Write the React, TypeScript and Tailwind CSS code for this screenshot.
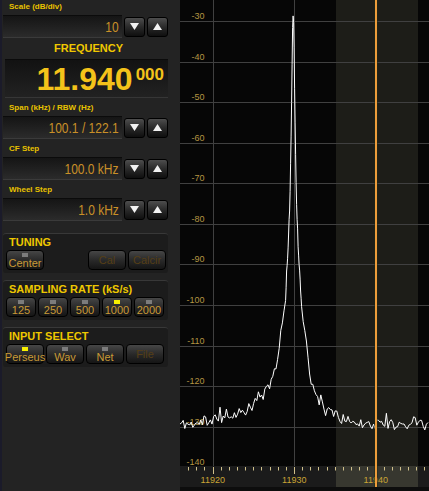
import React from 'react';

// spectrum geometry (local svg coords, panel is 249px wide)
const W = 249;
const PLOT_H = 466;
const PX_PER_KHZ = 8.15;
const F_LEFT = 11930 - 114 / PX_PER_KHZ;
const PX_PER_DB = 4.057;
const PEAK_X = 113.2;

const yOf = (db: number) => 21 + (-30 - db) * PX_PER_DB;
const xOf = (khz: number) => (khz - F_LEFT) * PX_PER_KHZ;
const crisp = (v: number) => Math.round(v) + 0.5;

type Pt = [number, number];

// distance from carrier (px) -> level (dB)
const LEFT: Pt[] = [
  [0, -28], [0.7, -32], [1.3, -45], [2.2, -60], [3.3, -74], [5, -86], [7.8, -99],
  [13.5, -111], [20.5, -118], [28.5, -122], [43.5, -125.5], [63.5, -127.3], [95, -129.3], [300, -130],
];
const RIGHT: Pt[] = [
  [0, -28], [0.7, -32], [1.3, -45], [2.2, -60], [3.2, -74], [5, -86], [8.2, -99],
  [13.2, -111], [18, -118.5], [22.5, -122.5], [31.5, -126], [46.5, -128], [70, -129.4], [300, -129.8],
];

function interp(tab: Pt[], d: number) {
  for (let i = 1; i < tab.length; i++) {
    if (d <= tab[i][0]) {
      const [d0, v0] = tab[i - 1];
      const [d1, v1] = tab[i];
      return v0 + ((v1 - v0) * (d - d0)) / (d1 - d0);
    }
  }
  return tab[tab.length - 1][1];
}

function mulberry32(seed: number) {
  let a = seed;
  return () => {
    a |= 0;
    a = (a + 0x6d2b79f5) | 0;
    let t = Math.imul(a ^ (a >>> 15), 1 | a);
    t = (t + Math.imul(t ^ (t >>> 7), 61 | t)) ^ t;
    return ((t ^ (t >>> 14)) >>> 0) / 4294967296;
  };
}

function buildTrace() {
  const r = mulberry32(11);
  const pts: string[] = [];
  let x = 0;
  while (x <= W) {
    const d = Math.abs(x - PEAK_X);
    let db = interp(x < PEAK_X ? LEFT : RIGHT, d);
    const amp = d < 3 ? 0.2 : d < 8 ? 0.8 : 1.3;
    db += (r() - 0.5) * 2 * amp;
    if (d > 6 && r() < 0.1) db += 1.2 + r() * 1.4;
    pts.push(`${x.toFixed(1)},${yOf(db).toFixed(1)}`);
    x += d < 8 ? 0.5 : 1.6;
  }
  return pts.join(' ');
}

function Spectrum() {
  const trace = React.useMemo(buildTrace, []);
  const levels = Array.from({ length: 12 }, (_, i) => -30 - i * 10);
  const ticks = Array.from({ length: 30 }, (_, i) => 11917 + i);
  const filterL = xOf(11940) - 39.5;
  const filterR = xOf(11940) + 42.5;
  const marker = 196;

  return (
    <div className="h-full flex-1 bg-[#060606]">
      <svg width={W} height={491} viewBox={`0 0 ${W} 491`} className="block">
        <rect x={filterL} y={0} width={filterR - filterL} height={PLOT_H} fill="#1d1d18" />
        {levels.slice(0, 11).map((lv) => (
          <line key={lv} x1={0} x2={W} y1={crisp(yOf(lv))} y2={crisp(yOf(lv))} stroke="#404040" strokeWidth={1} />
        ))}
        {[11920, 11930].map((f) => (
          <line key={f} x1={crisp(xOf(f))} x2={crisp(xOf(f))} y1={0} y2={PLOT_H} stroke="#404040" strokeWidth={1} />
        ))}
        {levels.map((lv) => (
          <text key={lv} x={24.5} y={yOf(lv) - 2} textAnchor="end" fontSize={9} fill="#b39442">
            {lv}
          </text>
        ))}
        <polyline points={trace} fill="none" stroke="#ffffff" strokeWidth={1} strokeLinejoin="round" />

        {/* frequency axis */}
        <rect x={0} y={PLOT_H} width={W} height={21} fill="#1b1b1b" />
        <rect x={filterL} y={PLOT_H} width={filterR - filterL} height={21} fill="#37372f" />
        <rect x={0} y={487} width={W} height={4} fill="#0d0d0d" />
        {ticks.map((k) => (
          <line
            key={k}
            x1={crisp(xOf(k))}
            x2={crisp(xOf(k))}
            y1={467}
            y2={k % 10 === 0 ? 474 : 470.5}
            stroke="#cfc08c"
            strokeWidth={1}
          />
        ))}
        {[11920, 11930, 11940].map((f) => (
          <text key={f} x={xOf(f) + 0.3} y={482.5} textAnchor="middle" fontSize={9} fill="#c9a535">
            {f}
          </text>
        ))}

        <rect x={marker - 1.5} y={0} width={3} height={487} fill="#1f2a16" />
        <rect x={marker - 1} y={0} width={2} height={487} fill="#e8902c" />
        <rect x={marker - 0.5} y={0} width={1} height={487} fill="#f7b45a" opacity={0.7} />
      </svg>
    </div>
  );
}

const LABEL = 'text-[8px] font-bold leading-[10px] text-[#e8c200]';

function ArrowBtn({ up }: { up?: boolean }) {
  return (
    <div className="flex h-[20px] w-[21px] items-center justify-center rounded-[3px] border border-black bg-gradient-to-b from-[#4e4e4e] via-[#2a2a2a] to-[#0f0f0f]">
      <svg width="9" height="7" viewBox="0 0 9 7">
        <polygon points={up ? '4.5,0 9,7 0,7' : '0,0 9,0 4.5,7'} fill="#f2f2f2" />
      </svg>
    </div>
  );
}

function ValueRow({ label, value, first }: { label: string; value: string; first?: boolean }) {
  return (
    <div>
      <div className={`${first ? 'mt-[2px]' : 'mt-[5px]'} pl-[7px] ${LABEL}`}>{label}</div>
      <div className="mt-[3px] flex items-center">
        <div className="ml-[1px] flex h-[23px] w-[119px] items-center justify-end border-t border-b border-t-[#0b0b0b] border-b-[#3a3a3a] bg-gradient-to-b from-[#151515] to-[#2b2b2b] pr-[3px]">
          <span className="inline-block origin-right scale-x-[0.8] text-[15px] leading-[15px] text-[#c99028]">
            {value}
          </span>
        </div>
        <div className="ml-[2px] flex gap-[2px]">
          <ArrowBtn />
          <ArrowBtn up />
        </div>
      </div>
    </div>
  );
}

type Led = 'on' | 'off' | undefined;

function Btn({ w, text, led, disabled }: { w: string; text: string; led?: Led; disabled?: boolean }) {
  return (
    <div
      className={`flex h-[20px] flex-col items-center rounded-[4px] border border-black bg-gradient-to-b from-[#464646] via-[#2a2a2a] to-[#151515] ${
        led ? '' : 'justify-center'
      } ${w}`}
    >
      {led && (
        <div className={`mt-[2px] h-[4px] w-[6px] ${led === 'on' ? 'bg-[#f7ef00]' : 'bg-[#7c7c7c]'}`} />
      )}
      <span
        className={`text-[11px] leading-[11px] ${led ? 'mt-[1.5px]' : ''} ${
          disabled ? 'text-[#563f16]' : 'text-[#c99a36]'
        }`}
      >
        {text}
      </span>
    </div>
  );
}

function Group({ title, className, children }: { title: string; className: string; children: React.ReactNode }) {
  return (
    <div className={`ml-[1px] w-[165px] rounded-[3px] border-t border-[#383838] bg-[#1c1c1c] pb-[3px] ${className}`}>
      <div className="pl-[6px] pt-[2px] text-[11px] font-bold leading-[12px] text-[#eec800]">{title}</div>
      <div className="mt-[2px] pl-[3px] pr-[2px]">{children}</div>
    </div>
  );
}

function ControlPanel() {
  return (
    <div className="h-full w-[180px] shrink-0 border-l-2 border-[#1b1b2a] bg-[#232323]">
      <ValueRow first label="Scale (dB/div)" value="10" />

      <div className="mt-[3px] pr-[5px] text-center text-[11px] font-bold leading-[14px] text-[#f0c800]">
        FREQUENCY
      </div>
      <div className="ml-[3px] mt-[4px] flex h-[39px] w-[163px] items-start justify-end border-t border-b border-t-[#0b0b0b] border-b-[#363636] bg-gradient-to-b from-[#121212] to-[#222222] pr-[4px] pt-[3px]">
        <span className="text-[32px] font-bold leading-[32px] text-[#f4c31a]">11.940</span>
        <span className="ml-[3px] mt-[3px] text-[17px] font-bold leading-[17px] text-[#f4c31a]">000</span>
      </div>

      <ValueRow label="Span (kHz) / RBW (Hz)" value="100.1 / 122.1" />
      <ValueRow label="CF Step" value="100.0 kHz" />
      <ValueRow label="Wheel Step" value="1.0 kHz" />

      <Group title="TUNING" className="mt-[12px]">
        <div className="flex justify-between">
          <Btn w="w-[38px]" text="Center" led="off" />
          <div className="flex gap-[2px]">
            <Btn w="w-[38px]" text="Cal" disabled />
            <Btn w="w-[38px]" text="Calcir" disabled />
          </div>
        </div>
      </Group>

      <Group title="SAMPLING RATE (kS/s)" className="mt-[7px]">
        <div className="flex gap-[2px]">
          <Btn w="w-[30px]" text="125" led="off" />
          <Btn w="w-[30px]" text="250" led="off" />
          <Btn w="w-[30px]" text="500" led="off" />
          <Btn w="w-[30px]" text="1000" led="on" />
          <Btn w="w-[30px]" text="2000" led="off" />
        </div>
      </Group>

      <Group title="INPUT SELECT" className="mt-[7px]">
        <div className="flex gap-[2px]">
          <Btn w="w-[38px]" text="Perseus" led="on" />
          <Btn w="w-[38px]" text="Wav" led="off" />
          <Btn w="w-[38px]" text="Net" led="off" />
          <Btn w="w-[38px]" text="File" disabled />
        </div>
      </Group>
    </div>
  );
}

export default function App() {
  return (
    <div className="flex h-[491px] w-[429px] overflow-hidden bg-black font-['Liberation_Sans',Arial,sans-serif]">
      <ControlPanel />
      <Spectrum />
    </div>
  );
}
